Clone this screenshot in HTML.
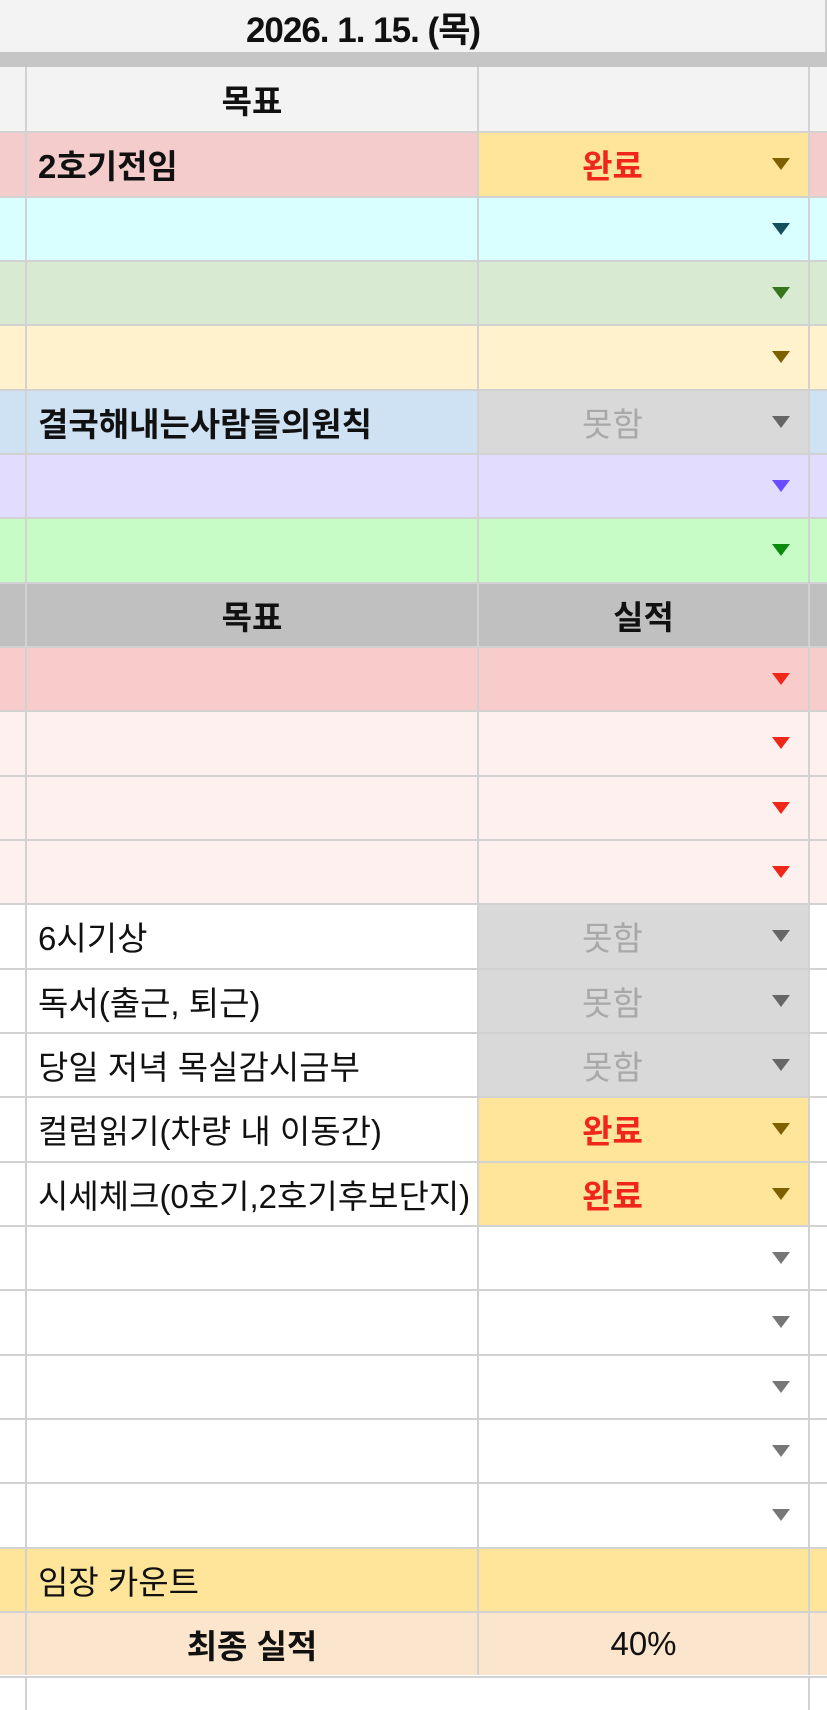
<!DOCTYPE html>
<html><head><meta charset="utf-8">
<style>
*{margin:0;padding:0;box-sizing:border-box}
body{width:827px;height:1708px;overflow:hidden;background:#fff;font-family:"Liberation Sans","Noto Sans CJK KR","NanumGothic",sans-serif;color:#111}
#top{position:absolute;left:0;top:0;width:827px;height:52px;background:#f3f3f3;border-right:2px solid #cfcfcf}
#top span{position:absolute;left:0;width:726px;top:2px;text-align:center;font-weight:bold;font-size:35px;letter-spacing:-1px}
#band{position:absolute;left:0;top:52px;width:827px;height:15px;background:#c6c6c6}
#rows{position:absolute;left:0;top:67px;width:827px}
.r{display:grid;grid-template-columns:25px 452px 331px 19px;height:64.34px;border-top:2px solid #d2d2d2}
.r>div{border-left:2px solid #d2d2d2;position:relative;display:flex;align-items:center;font-size:33px;overflow:hidden;white-space:nowrap}
.r>div:first-child{border-left:none}
.t{padding-left:11px;letter-spacing:0}
.b{font-weight:bold}
.c{justify-content:center}
.s{padding-right:62px}
.red{color:#f0261a;font-weight:bold}
.gr{color:#a8a8a8}
.a::after{content:"";position:absolute;right:18px;top:25px;border-left:9px solid transparent;border-right:9px solid transparent;border-top:12px solid var(--ac,#777)}
.bot{position:absolute;left:0;top:1676px;width:827px;height:32px;border-top:2px solid #d2d2d2}
.bot div{position:absolute;top:0;height:32px;border-left:2px solid #d2d2d2}
</style></head><body>
<div id="top"><span>2026. 1. 15. (목)</span></div>
<div id="band"></div>
<div id="rows">
<div class="r" style="background:#f3f3f3;border-top:none"><div></div><div class="c b">목표</div><div></div><div></div></div>
<div class="r" style="background:#f4cccc"><div></div><div class="t b">2호기전임</div><div class="c s red a" style="background:#ffe599;--ac:#7f6000">완료</div><div></div></div>
<div class="r" style="background:#d9ffff"><div></div><div></div><div class="a" style="--ac:#134f5c"></div><div></div></div>
<div class="r" style="background:#d9ead3"><div></div><div></div><div class="a" style="--ac:#38761d"></div><div></div></div>
<div class="r" style="background:#fff2cc"><div></div><div></div><div class="a" style="--ac:#7f6000"></div><div></div></div>
<div class="r" style="background:#cfe2f3"><div></div><div class="t b">결국해내는사람들의원칙</div><div class="c s gr a" style="background:#d9d9d9;--ac:#666">못함</div><div></div></div>
<div class="r" style="background:#e2dcff"><div></div><div></div><div class="a" style="--ac:#6a4cff"></div><div></div></div>
<div class="r" style="background:#c7fcc7"><div></div><div></div><div class="a" style="--ac:#0c8a0c"></div><div></div></div>
<div class="r" style="background:#c0c0c0"><div></div><div class="c b">목표</div><div class="c b">실적</div><div></div></div>
<div class="r" style="background:#f9cccc"><div></div><div></div><div class="a" style="--ac:#f0261a"></div><div></div></div>
<div class="r" style="background:#fff0f0"><div></div><div></div><div class="a" style="--ac:#f0261a"></div><div></div></div>
<div class="r" style="background:#fff0f0"><div></div><div></div><div class="a" style="--ac:#f0261a"></div><div></div></div>
<div class="r" style="background:#fff0f0"><div></div><div></div><div class="a" style="--ac:#f0261a"></div><div></div></div>
<div class="r"><div></div><div class="t">6시기상</div><div class="c s gr a" style="background:#d9d9d9;--ac:#666">못함</div><div></div></div>
<div class="r"><div></div><div class="t">독서(출근, 퇴근)</div><div class="c s gr a" style="background:#d9d9d9;--ac:#666">못함</div><div></div></div>
<div class="r"><div></div><div class="t">당일 저녁 목실감시금부</div><div class="c s gr a" style="background:#d9d9d9;--ac:#666">못함</div><div></div></div>
<div class="r"><div></div><div class="t">컬럼읽기(차량 내 이동간)</div><div class="c s red a" style="background:#ffe599;--ac:#7f6000">완료</div><div></div></div>
<div class="r"><div></div><div class="t">시세체크(0호기,2호기후보단지)</div><div class="c s red a" style="background:#ffe599;--ac:#7f6000">완료</div><div></div></div>
<div class="r"><div></div><div></div><div class="a" style="--ac:#777"></div><div></div></div>
<div class="r"><div></div><div></div><div class="a" style="--ac:#777"></div><div></div></div>
<div class="r"><div></div><div></div><div class="a" style="--ac:#777"></div><div></div></div>
<div class="r"><div></div><div></div><div class="a" style="--ac:#777"></div><div></div></div>
<div class="r"><div></div><div></div><div class="a" style="--ac:#777"></div><div></div></div>
<div class="r" style="background:#ffe599"><div></div><div class="t">임장 카운트</div><div></div><div></div></div>
<div class="r" style="background:#fce5cd"><div></div><div class="c b">최종 실적</div><div class="c">40%</div><div></div></div>
</div>
<div class="bot"><div style="left:25px"></div><div style="left:808px"></div></div>
</body></html>
